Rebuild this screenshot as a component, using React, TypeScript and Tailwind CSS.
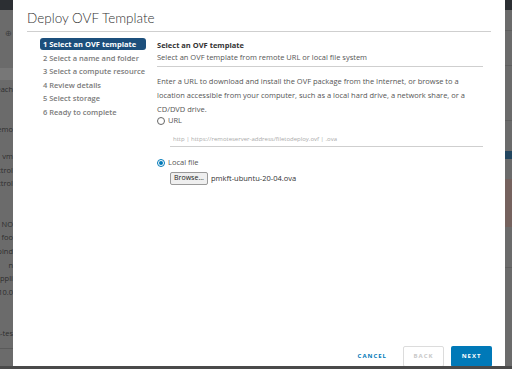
import React from 'react'

const steps = [
  '1 Select an OVF template',
  '2 Select a name and folder',
  '3 Select a compute resource',
  '4 Review details',
  '5 Select storage',
  '6 Ready to complete',
]

// rows of the dimmed page behind the dialog (only their ends peek out)
const backRows: { text: string; mt: string }[] = [
  { text: 'each', mt: 'mt-[4px]' },
  { text: 'demo', mt: 'mt-[30px]' },
  { text: 'vm', mt: 'mt-[17px]' },
  { text: 'ctrol', mt: 'mt-[4px]' },
  { text: 'ctrol', mt: 'mt-[3px]' },
  { text: 'NO', mt: 'mt-[31px]' },
  { text: 'foo', mt: 'mt-[3px]' },
  { text: 'bind', mt: 'mt-[4px]' },
  { text: 'n', mt: 'mt-[4px]' },
  { text: 'appli', mt: 'mt-[3px]' },
  { text: '10.0', mt: 'mt-[4px]' },
  { text: 'k-tes', mt: 'mt-[31px]' },
]

function Radio({ checked }: { checked?: boolean }) {
  return (
    <span
      className={
        checked
          ? 'flex h-[8px] w-[8px] shrink-0 items-center justify-center rounded-full border border-[#0079b8]'
          : 'flex h-[8px] w-[8px] shrink-0 items-center justify-center rounded-full border border-[#666]'
      }>
      {checked && <span className="h-[4px] w-[4px] rounded-full bg-[#0079b8]" />}
    </span>
  )
}

export default function App() {
  return (
    <div
      className="relative flex h-[369px] w-[512px] overflow-hidden bg-[#6b6b6b]"
      style={{ fontFamily: '"Open Sans", "Noto Sans", sans-serif' }}>
      {/* Левая полоска фона */}
      <div className="flex w-[13px] shrink-0 flex-col overflow-hidden">
        <div className="h-[10px] bg-[#2c2f33]" />
        <div className="mt-[18px] flex h-[10px] justify-end pr-[1px] text-[8px] leading-[10px] text-[#3c3c3c]">⊕</div>
        <div className="mt-[30px] h-[12px] bg-[#777]" />
        <div className="flex flex-col items-end">
          {backRows.map((r, i) => (
            <div key={i} className={`${r.mt} h-[10px] whitespace-nowrap text-[7.5px] leading-[10px] text-[#2e2e2e]`}>
              {r.text}
            </div>
          ))}
        </div>
        <div className="mt-[10px] h-px bg-[#5a5a5a]" />
      </div>

      {/* Диалог */}
      <div className="flex h-[366px] w-[492px] shrink-0 flex-col bg-white">
        <div className="mx-[14px] border-b border-[#cfcfcf] pt-[8px] pb-[3px]">
          <h1
            className="text-[13.5px] font-light leading-[20px] text-[#313131]"
            style={{ fontFamily: 'Lato, "Open Sans", sans-serif' }}>
            Deploy OVF Template
          </h1>
        </div>

        <div className="flex flex-1">
          {/* Шаги */}
          <div className="ml-[27px] mt-[6px] flex w-[106px] shrink-0 flex-col gap-[1.5px]">
            {steps.map((s, i) => (
              <div
                key={s}
                className={
                  i === 0
                    ? 'h-[12px] whitespace-nowrap rounded-[3px] bg-[#1c4f7c] px-[3px] text-[7.5px] font-bold leading-[12px] text-white'
                    : 'h-[12px] whitespace-nowrap px-[3px] text-[7.5px] font-semibold leading-[12px] text-[#7a7a7a]'
                }>
                {s}
              </div>
            ))}
          </div>

          {/* Содержимое */}
          <div className="ml-[11px] mr-[22px] mt-[7px] flex flex-1 flex-col">
            <div className="text-[7.5px] font-bold leading-[12px] text-[#333]">Select an OVF template</div>
            <div className="text-[7.5px] leading-[13px] text-[#555]">
              Select an OVF template from remote URL or local file system
            </div>
            <div className="mt-[2px] h-px bg-[#cfcfcf]" />
            <p className="mt-[7px] text-[7.5px] leading-[14px] text-[#555]">
              Enter a URL to download and install the OVF package from the Internet, or browse to a location
              accessible from your computer, such as a local hard drive, a network share, or a CD/DVD drive.
            </p>
            <label className="flex h-[10px] items-center gap-[3px] text-[7.5px] text-[#555]">
              <Radio />
              URL
            </label>
            <div className="ml-[13px] mt-[8px] border-b border-[#cfcfcf] pb-[2px] pl-[3px] text-[6px] leading-[10px] text-[#aaa]">
              http | https://remoteserver-address/filetodeploy.ovf | .ova
            </div>
            <label className="mt-[11px] flex h-[10px] items-center gap-[3px] text-[7.5px] text-[#555]">
              <Radio checked />
              Local file
            </label>
            <div className="ml-[13px] mt-[4px] flex items-center gap-[3px]">
              <span className="flex h-[13px] w-[38px] items-center justify-center rounded-[2px] border border-[#9a9a9a] bg-[#efefef] text-[7px] text-[#222]">
                Browse...
              </span>
              <span className="text-[7.5px] text-[#333]">pmkft-ubuntu-20-04.ova</span>
            </div>
          </div>
        </div>

        {/* Кнопки */}
        <div className="mb-[-1px] mr-[13px] flex h-[21px] items-center justify-end">
          <span className="mr-[16px] text-[6px] font-bold tracking-[1px] text-[#0079b8]">CANCEL</span>
          <span className="mr-[7px] flex h-[21px] w-[41px] items-center justify-center rounded-[2px] border border-[#dcdcdc] text-[6px] font-bold tracking-[1px] text-[#c8c8c8]">
            BACK
          </span>
          <span className="flex h-[21px] w-[41px] items-center justify-center rounded-[2px] bg-[#0079b8] text-[6px] font-bold tracking-[1px] text-white">
            NEXT
          </span>
        </div>
      </div>

      {/* Правая полоска фона */}
      <div className="flex w-[7px] shrink-0 flex-col overflow-hidden">
        <div className="h-[10px] bg-[#2c2f33]" />
        <div className="mt-[20px] h-px bg-[#5f5f5f]" />
        <div className="mt-[34px] h-px bg-[#5f5f5f]" />
        <div className="mt-[54px] h-px bg-[#5f5f5f]" />
        <div className="mt-[30px] h-[8px] bg-[#23465f]" />
        <div className="mt-[20px] h-[48px] bg-[#75625e]" />
        <div className="mt-[40px] h-px bg-[#5f5f5f]" />
      </div>

      <div className="absolute bottom-0 left-0 h-[3px] w-full bg-[#4a4a4a]" />
    </div>
  )
}
